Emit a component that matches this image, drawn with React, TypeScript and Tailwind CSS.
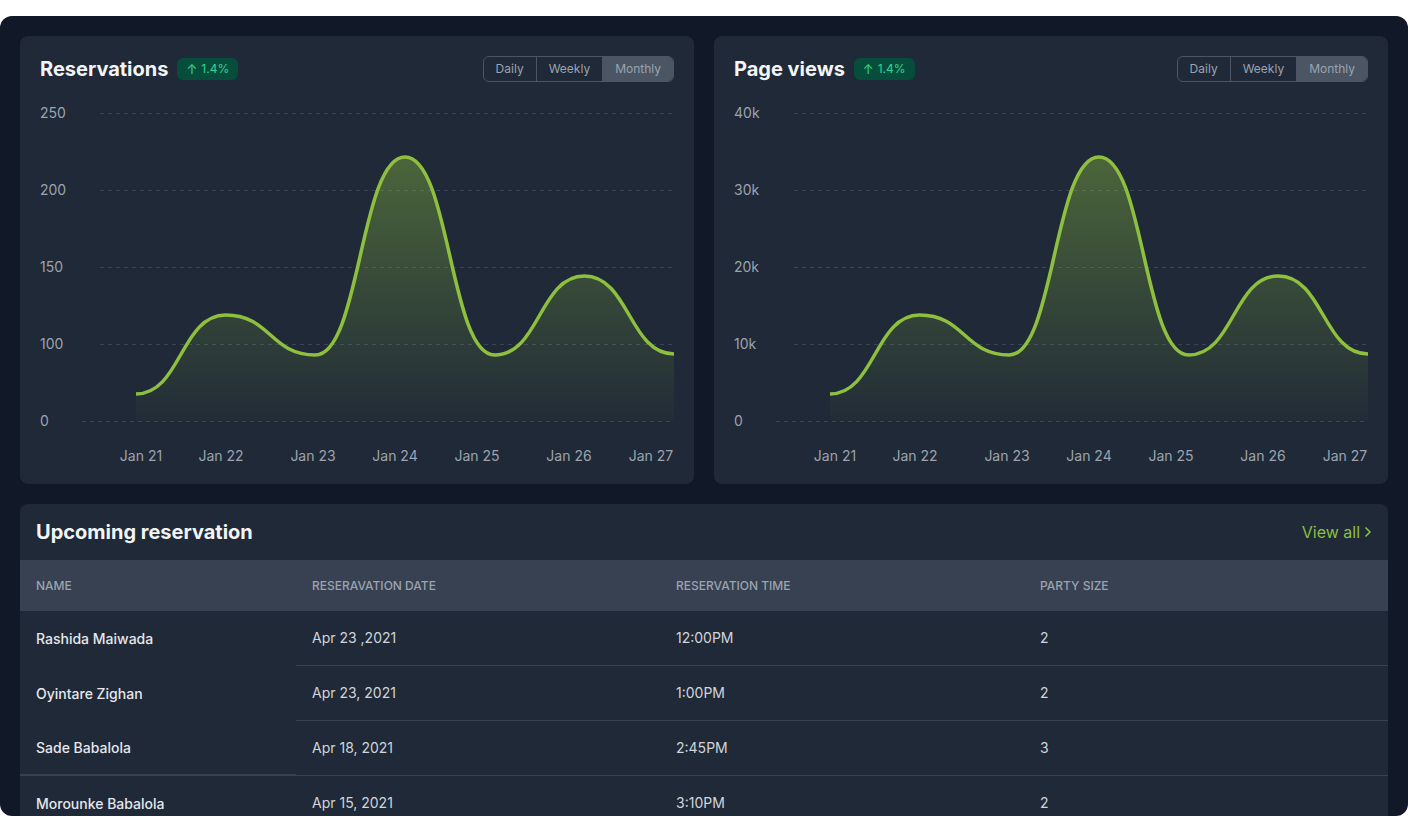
import React from "react";
import { ChevronRight } from "lucide-react";

const LINE = "#8ebf3f";
const XS = [96, 185.67, 275.33, 365, 454.67, 544.33, 634];
const YS = [294, 215, 255, 57, 255, 176, 254];
const XLABELS = ["Jan 21", "Jan 22", "Jan 23", "Jan 24", "Jan 25", "Jan 26", "Jan 27"];
const XLABEL_POS = [101, 181, 273, 355, 437, 529, 611];
const GRID_Y = [13, 90, 167, 244, 321];

function buildPath() {
  let d = `M ${XS[0]} ${YS[0]}`;
  for (let i = 1; i < XS.length; i++) {
    const x0 = XS[i - 1];
    const y0 = YS[i - 1];
    const x1 = XS[i];
    const y1 = YS[i];
    const dx = (x1 - x0) / 2;
    d += ` C ${x0 + dx} ${y0} ${x1 - dx} ${y1} ${x1} ${y1}`;
  }
  return d;
}

function Chart({ id, yLabels }: { id: string; yLabels: string[] }) {
  const line = buildPath();
  const area = `${line} L 634 321 L 96 321 Z`;
  return (
    <svg width="634" height="364" viewBox="0 0 634 364" className="mt-[18px] block" style={{ fontFamily: "Inter, sans-serif" }}>
      <defs>
        <linearGradient id={id} x1="0" y1="57" x2="0" y2="321" gradientUnits="userSpaceOnUse">
          <stop offset="0" stopColor={LINE} stopOpacity="0.4" />
          <stop offset="1" stopColor={LINE} stopOpacity="0.02" />
        </linearGradient>
      </defs>
      {GRID_Y.map((y, i) => (
        <g key={i}>
          <line
            x1={yLabels[i].length > 1 ? 60 : 42}
            x2={634}
            y1={y + 0.5}
            y2={y + 0.5}
            stroke="#3a4555"
            strokeWidth="1"
            strokeDasharray="4 4"
          />
          <text x="0" y={y + 5} fill="#9ca3af" fontSize="14">
            {yLabels[i]}
          </text>
        </g>
      ))}
      <path d={area} fill={`url(#${id})`} />
      <path d={line} fill="none" stroke={LINE} strokeWidth="3.5" strokeLinecap="butt" />
      {XLABELS.map((l, i) => (
        <text key={l} x={XLABEL_POS[i]} y="361" fill="#9ca3af" fontSize="14" textAnchor="middle">
          {l}
        </text>
      ))}
    </svg>
  );
}

function ChartCard({ title, id, yLabels }: { title: string; id: string; yLabels: string[] }) {
  return (
    <div className="flex flex-col rounded-lg bg-[#1f2937] p-5">
      <div className="flex h-[26px] items-center justify-between">
        <div className="flex items-center gap-[9px]">
          <h2 className="text-xl font-bold text-[#f3f4f6]">{title}</h2>
          <span className="flex h-[22px] items-center gap-1 rounded-md bg-[#064e3b] px-[9px] text-xs text-[#34d399]">
            <span className="text-[13px] leading-none">↑</span>
            <span>1.4%</span>
          </span>
        </div>
        <div className="flex h-[26px] overflow-hidden rounded-md border border-[#4b5563] text-xs text-[#9ca3af]">
          <button className="px-3">Daily</button>
          <button className="border-l border-[#4b5563] px-3">Weekly</button>
          <button className="border-l border-[#4b5563] bg-[#4b5563] px-3">Monthly</button>
        </div>
      </div>
      <Chart id={id} yLabels={yLabels} />
    </div>
  );
}

const ROWS = [
  ["Rashida Maiwada", "Apr 23 ,2021", "12:00PM", "2"],
  ["Oyintare Zighan", "Apr 23, 2021", "1:00PM", "2"],
  ["Sade Babalola", "Apr 18, 2021", "2:45PM", "3"],
  ["Morounke Babalola", "Apr 15, 2021", "3:10PM", "2"],
];

export default function App() {
  return (
    <div className="h-[832px] bg-white pt-4" style={{ fontFamily: "Inter, 'Noto Sans', sans-serif" }}>
      <div className="flex h-[800px] flex-col gap-5 overflow-hidden rounded-xl bg-[#111827] px-5 pt-5">
        <div className="grid grid-cols-2 gap-5">
          <ChartCard title="Reservations" id="g1" yLabels={["250", "200", "150", "100", "0"]} />
          <ChartCard title="Page views" id="g2" yLabels={["40k", "30k", "20k", "10k", "0"]} />
        </div>
        <div className="rounded-lg bg-[#1f2937]">
          <div className="flex h-14 items-center justify-between pl-4 pr-3">
            <h2 className="text-xl font-bold text-[#f3f4f6]">Upcoming reservation</h2>
            <a className="flex items-center text-base text-[#8ebf3f]">
              View all
              <ChevronRight size={16} strokeWidth={2.5} />
            </a>
          </div>
          <div className="grid h-[51px] grid-cols-[276px_364px_364px_1fr] items-center bg-[#374151] text-xs font-medium uppercase text-[#9ca3af]">
            <div className="pl-4">Name</div>
            <div className="pl-4">Reseravation Date</div>
            <div className="pl-4">Reservation Time</div>
            <div className="pl-4">Party Size</div>
          </div>
          {ROWS.map((r, i) => (
            <div key={i} className="grid h-[55px] grid-cols-[276px_364px_364px_1fr] text-sm">
              <div
                className={`flex items-center pl-4 font-medium text-[#e5e7eb] ${
                  i === 2 ? "border-b-2 border-[#374151]" : ""
                }`}
              >
                {r[0]}
              </div>
              <div className="flex items-center border-b border-[#374151] pl-4 text-[#d1d5db]">{r[1]}</div>
              <div className="flex items-center border-b border-[#374151] pl-4 text-[#d1d5db]">{r[2]}</div>
              <div className="flex items-center border-b border-[#374151] pl-4 text-[#d1d5db]">{r[3]}</div>
            </div>
          ))}
        </div>
      </div>
    </div>
  );
}
